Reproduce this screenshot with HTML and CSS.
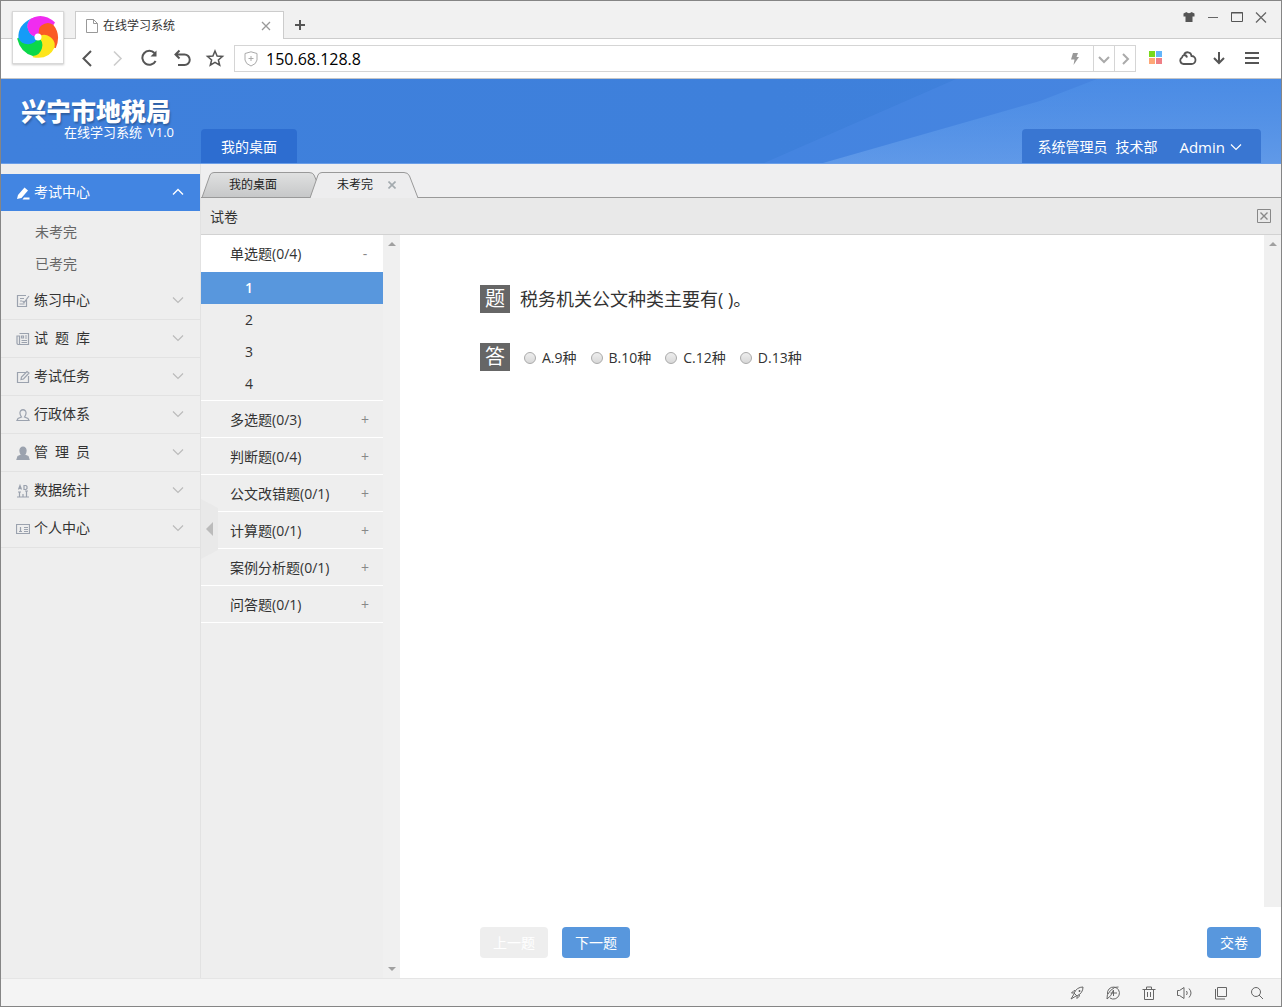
FILE: index.html
```html
<!DOCTYPE html>
<html lang="zh-CN">
<head>
<meta charset="utf-8">
<title>在线学习系统</title>
<link rel="stylesheet" href="styles.css">
</head>
<body>
<svg class="defs" aria-hidden="true">
  <symbol id="down" viewBox="0 0 12 8"><path d="M1 1.500l5 5 5-5" fill="none" stroke="currentColor" stroke-width="1.200"/></symbol>
  <symbol id="up" viewBox="0 0 12 8"><path d="M1 6.500l5-5 5 5" fill="none" stroke="currentColor" stroke-width="1.400"/></symbol>
  <symbol id="petal" viewBox="-23 -23 46 46"><path d="M0 0A11 11 0 0 1-6.500-18.500Q5-24 17-14L16.500-11.500A12.500 12.500 0 0 0 0 0Z" fill="currentColor"/></symbol>
</svg>

<div class="browser">
  <div class="browser-logo">
    <svg width="46" height="46" viewBox="-23 -23 46 46">
      <g fill="#f02cf0"><path d="M0 0A10.500 10.500 0 0 1-7-18.300Q5-25 17-14.500L15.400-12.100A12 12 0 0 0 0 0Z"/></g>
      <g fill="#fb5a24" transform="rotate(72)"><path d="M0 0A10.500 10.500 0 0 1-7-18.300Q5-23 16-13.500L15.400-12.100A12 12 0 0 0 0 0Z"/></g>
      <g fill="#fde51c" transform="rotate(144)"><path d="M0 0A10.500 10.500 0 0 1-7-18.300Q5-25 16-13.500L15.400-12.100A12 12 0 0 0 0 0Z"/></g>
      <g fill="#0bd84a" transform="rotate(216)"><path d="M0 0A10.500 10.500 0 0 1-7-18.300Q5-23 16-13.500L15.400-12.100A12 12 0 0 0 0 0Z"/></g>
      <g fill="#159bf8" transform="rotate(288)"><path d="M0 0A10.500 10.500 0 0 1-7-18.300Q5-23 15.400-12.100A10.500 10.500 0 0 0 0 0Z"/></g>
      <path d="M0 0A10.500 10.500 0 0 1-7-18.300Q-2-21 3-20Z" fill="#f02cf0"/>
      <circle r="3.500" fill="#fff"/>
    </svg>
  </div>
  <div class="tab-strip">
    <div class="browser-tab">
      <svg width="12" height="14" viewBox="0 0 12 14" fill="none" stroke="#999"><path d="M.5.500h7l4 4v9H.5zM7.500.500v4h4"/></svg>
      <span class="browser-tab-title">在线学习系统</span>
      <button class="plain" aria-label="关闭标签"><svg width="10" height="10" viewBox="0 0 10 10" stroke="#999" stroke-width="1.300"><path d="M1 1l8 8M9 1l-8 8"/></svg></button>
    </div>
    <button class="plain new-tab" aria-label="新标签"><svg width="12" height="12" viewBox="0 0 12 12" stroke="#555" stroke-width="2"><path d="M6 1v10M1 6h10"/></svg></button>
    <div class="window-buttons">
      <button class="plain" aria-label="皮肤"><svg width="12" height="12" viewBox="0 0 12 12" fill="#555"><path d="M3.500 1C4.500 2.500 7.500 2.500 8.500 1L11.500 2.500V5.500H9.500V11H2.500V5.500H.5V2.500Z"/></svg></button>
      <button class="plain" aria-label="最小化"><svg width="12" height="12" viewBox="0 0 12 12" stroke="#666"><path d="M1 6.500h10"/></svg></button>
      <button class="plain" aria-label="最大化"><svg width="12" height="12" viewBox="0 0 12 12" fill="none" stroke="#555"><path d="M.5 1.500h11v9H.5zM0 2h12"/></svg></button>
      <button class="plain" aria-label="关闭"><svg width="12" height="12" viewBox="0 0 12 12" stroke="#666" stroke-width="1.300"><path d="M1 1.500l10 10M11 1.500l-10 10"/></svg></button>
    </div>
  </div>
  <div class="toolbar">
    <div class="nav-buttons">
      <button class="plain" aria-label="后退"><svg width="20" height="20" viewBox="0 0 20 20" fill="none" stroke="#555" stroke-width="2"><path d="M14 3L6.500 10.500 14 18"/></svg></button>
      <button class="plain" aria-label="前进"><svg width="20" height="20" viewBox="0 0 20 20" fill="none" stroke="#ccc" stroke-width="1.600"><path d="M5 3.500L12 10.500 5 17.500"/></svg></button>
      <button class="plain" aria-label="刷新"><svg width="20" height="20" viewBox="0 0 20 20" fill="none" stroke="#555" stroke-width="2"><path d="M13.500 5A7 7 0 1 0 14.600 13"/><path d="M15.500 2.500v6h-6z" fill="#555" stroke="none"/></svg></button>
      <button class="plain" aria-label="撤销"><svg width="20" height="20" viewBox="0 0 20 20" fill="none" stroke="#555" stroke-width="2"><path d="M6.500 2.500L2.500 6.500l4 4M3 6.500h8.500a5 5 0 0 1 0 10.500H5"/></svg></button>
      <button class="plain" aria-label="收藏"><svg width="20" height="20" viewBox="0 0 20 20" fill="none" stroke="#555" stroke-width="1.500"><path d="M10 3l2.100 5 5.400.4-4.100 3.500 1.300 5.300L10 14.300l-4.700 2.900 1.300-5.300L2.500 8.400 7.900 8z"/></svg></button>
    </div>
    <div class="address">
      <svg width="14" height="16" viewBox="0 0 14 16" fill="none" stroke="#aaa"><path d="M7 .8L13 2.500V9Q12.500 13 7 15 1.500 13 1 9V2.500ZM7 5v5M4.500 7.500h5"/></svg>
      <input type="text" value="150.68.128.8" aria-label="地址">
      <button class="plain bolt" aria-label="极速模式"><svg width="10" height="14" viewBox="0 0 10 14" fill="#999"><path d="M3 1h5L6.500 5H9L3.500 13 4.500 7.500H1z"/></svg></button>
      <button class="plain cell" aria-label="展开"><svg width="12" height="12" viewBox="0 0 12 12" fill="none" stroke="#aaa" stroke-width="2"><path d="M1 4l5 5 5-5"/></svg></button>
      <button class="plain cell" aria-label="转到"><svg width="12" height="12" viewBox="0 0 12 12" fill="none" stroke="#aaa" stroke-width="2"><path d="M4 1l5 5-5 5"/></svg></button>
    </div>
    <div class="tool-buttons">
      <button class="plain" aria-label="应用"><svg width="14" height="16" viewBox="0 0 14 16"><path fill="#78d91d" d="M0 1h6v6H0z"/><path fill="#62b5fb" d="M7 1h6v6H7z"/><path fill="#fea776" d="M0 8h6v6H0z"/><path fill="#ef7f86" d="M7 8h6v6H7z"/></svg></button>
      <button class="plain" aria-label="云"><svg width="18" height="16" viewBox="0 0 18 16" fill="none" stroke="#555" stroke-width="1.800"><path d="M4.500 14A3.500 3.500 0 0 1 3 7.500Q3.500 5.500 5 5C6.500 1 12 1.500 12.500 6A4 4 0 0 1 12.500 14ZM5 5Q7.500 5 8 7.500"/></svg></button>
      <button class="plain" aria-label="下载"><svg width="14" height="16" viewBox="0 0 14 16" fill="none" stroke="#555" stroke-width="2"><path d="M6 2v11M1 8l5 5 5-5"/></svg></button>
      <button class="plain" aria-label="菜单"><svg width="14" height="16" viewBox="0 0 14 16" stroke="#555" stroke-width="2"><path d="M0 3h14M0 8h14M0 13h14"/></svg></button>
    </div>
  </div>
</div>

<header class="app-header">
  <svg class="header-art" viewBox="0 0 517 84" preserveAspectRatio="none" aria-hidden="true">
    <defs><linearGradient id="beam" x2="0" y2="1"><stop stop-color="#5aa0f2" stop-opacity=".25"/><stop offset="1" stop-color="#8abaf5" stop-opacity=".38"/></linearGradient></defs>
    <path d="M0 84L192 0H517V84Z" fill="#5590ee" fill-opacity=".28"/>
    <path d="M59 84L276 22 333 0H517V84Z" fill="url(#beam)"/>
  </svg>
  <div class="brand"><h1>兴宁市地税局</h1><p><span>在线学习系统</span><span>V1.0</span></p></div>
  <nav><a class="top-link" href="#">我的桌面</a></nav>
  <div class="user"><span>系统管理员</span><span>技术部</span><button class="plain account">Admin<svg width="12" height="8"><use href="#down"/></svg></button></div>
</header>

<div class="app">
  <nav class="sidebar">
    <button class="menu active"><svg class="mi" viewBox="0 0 14 14" fill="#fff"><path d="M1 13L2 9 8.500 1.500l3.500 3-6.500 7.500zM6.500 13.500L8 11.500h5.500v2z"/></svg><span>考试中心</span><svg class="chev"><use href="#up"/></svg></button>
    <div class="submenu"><a href="#">未考完</a><a href="#">已考完</a></div>
    <button class="menu"><svg class="mi" viewBox="0 0 14 14"><path d="M10 1.500H1.500v11h9V6M4 4.500h4M4 7h2M3.500 10h5M6.500 7L8 8.500 13 2"/></svg><span>练习中心</span><svg class="chev"><use href="#down"/></svg></button>
    <button class="menu"><svg class="mi" viewBox="0 0 14 14"><path d="M3.500 1.500h9v11H2A1.500 1.500 0 0 1 1 11V4h2.500v8M5.500 4h2v2h-2zM9 4h2M9 6h2M5.500 8.500H11M5.500 10.500H11"/></svg><span>试&ensp;题&ensp;库</span><svg class="chev"><use href="#down"/></svg></button>
    <button class="menu"><svg class="mi" viewBox="0 0 14 14"><path d="M9.500 2.500h-8v10h11V6M5 9.500l.5-2.500L11 1.500 13 3 7.500 9z"/></svg><span>考试任务</span><svg class="chev"><use href="#down"/></svg></button>
    <button class="menu"><svg class="mi" viewBox="0 0 14 14"><path d="M5.500 9Q3 5.500 4.500 3 7 .5 9.500 3 11 5.500 8.500 9L12 10.500 13 12.500H1L2 10.500Z"/></svg><span>行政体系</span><svg class="chev"><use href="#down"/></svg></button>
    <button class="menu"><svg class="mi solid" viewBox="0 0 14 14"><path d="M5.500 9Q3 5.500 4.500 2.500 7 0 9.500 2.500 11 5.500 8.500 9L12 10.500 13 13.500H1L2 10.500Z"/></svg><span>管&ensp;理&ensp;员</span><svg class="chev"><use href="#down"/></svg></button>
    <button class="menu"><svg class="mi" viewBox="0 0 14 14"><path d="M1 13h12M3.500 13V8M7 13v-3M10.500 13V7M2.500 5.500l1.500-4 1.500 4M3 4.500h2M8 1.500h2l1 1v2l-1 1H8zM2 8h3M9 7h3"/></svg><span>数据统计</span><svg class="chev"><use href="#down"/></svg></button>
    <button class="menu"><svg class="mi" viewBox="0 0 14 14"><path d="M.5 2.500h13v9H.5zM3 9.500h3M4.500 9V5M8 5.500h4M8 7.500h4M8 9.500h4"/></svg><span>个人中心</span><svg class="chev"><use href="#down"/></svg></button>
  </nav>

  <main class="workspace">
    <div class="doc-tabs">
      <svg class="doc-tabs-shape" width="217" height="26" viewBox="0 0 217 26" aria-hidden="true">
        <defs><linearGradient id="tabfill" x2="0" y2="1"><stop stop-color="#e0e1e1"/><stop offset="1" stop-color="#c6c7c8"/></linearGradient></defs>
        <path d="M1 25.500L9 3Q10 .5 13 .5H108Q112 .5 113 3L116 10 109.500 25.500Z" fill="url(#tabfill)" stroke="#999"/>
        <path d="M109 26L117 3Q118 .5 121 .5H203Q207 .5 208.500 4L217 26" fill="#ededee" stroke="#999"/>
      </svg>
      <button class="doc-tab">我的桌面</button>
      <button class="doc-tab current">未考完</button>
      <button class="doc-tab-close" aria-label="关闭未考完"><svg width="8" height="8" viewBox="0 0 8 8" stroke="#a3aaae" stroke-width="1.600"><path d="M.5.500l7 7M7.500.500l-7 7"/></svg></button>
    </div>
    <div class="panel-title"><h2>试卷</h2><button class="plain" aria-label="关闭"><svg width="14" height="14" viewBox="0 0 14 14" fill="none" stroke="#888"><path d="M.5.500h13v13H.5z"/><path d="M3.500 3.500l7 7M10.500 3.500l-7 7" stroke-width="1.400"/></svg></button></div>
    <div class="panel">
      <nav class="questions">
        <button class="group open">单选题(0/4)<i>-</i></button>
        <div class="numbers"><a class="selected" href="#">1</a><a href="#">2</a><a href="#">3</a><a href="#">4</a></div>
        <button class="group">多选题(0/3)<i>+</i></button>
        <button class="group">判断题(0/4)<i>+</i></button>
        <button class="group">公文改错题(0/1)<i>+</i></button>
        <button class="group">计算题(0/1)<i>+</i></button>
        <button class="group">案例分析题(0/1)<i>+</i></button>
        <button class="group">问答题(0/1)<i>+</i></button>
        <button class="collapse" aria-label="收起"></button>
      </nav>
      <div class="scrollbar"><span class="arrow-up"></span><span class="arrow-down"></span></div>
      <form class="exam">
        <div class="exam-view">
          <div class="exam-body">
            <div class="exam-row"><span class="badge">题</span><p class="stem">税务机关公文种类主要有( )。</p></div>
            <div class="exam-row"><span class="badge">答</span>
              <div class="options">
                <label><input type="radio" name="q1">A.9种</label>
                <label><input type="radio" name="q1">B.10种</label>
                <label><input type="radio" name="q1">C.12种</label>
                <label><input type="radio" name="q1">D.13种</label>
              </div>
            </div>
          </div>
          <div class="scrollbar"><span class="arrow-up"></span></div>
        </div>
        <div class="actions">
          <button type="button" class="btn" disabled>上一题</button>
          <button type="button" class="btn">下一题</button>
          <button type="button" class="btn submit">交卷</button>
        </div>
      </form>
    </div>
  </main>
</div>

<footer class="status">
  <button class="plain" aria-label="加速"><svg viewBox="0 0 14 14"><path d="M4 7Q7 1 13 1 13 7 7 10ZM4 7H1.500L4 4.500 5.500 5M7 10v2.500L9.500 10 9 8.500M4 8L1 13l5-3M9 4.500h1v1H9z"/></svg></button>
  <button class="plain" aria-label="浏览器医生"><svg viewBox="0 0 14 14"><path d="M4 12A6 6 0 1 0 1.500 8M1 13Q0 9 4.500 4.500T12.500 1M1 13Q5 11 7.500 4M7.500 4v6M4.500 7H11"/></svg></button>
  <button class="plain" aria-label="清理"><svg viewBox="0 0 14 14"><path d="M.5 3.500h13M4.500 3V1h5v2M2.500 3.500v10h9v-10M5.500 6v5M8.500 6v5"/></svg></button>
  <button class="plain" aria-label="声音"><svg viewBox="0 0 16 14"><path d="M.5 4.500h2L7 1.500v11L2.500 9.500h-2zM9.500 5q1.500 2 0 4M12 2.500q4 4.500 0 9"/></svg></button>
  <button class="plain" aria-label="窗口"><svg viewBox="0 0 14 14"><path d="M3.500 1.500h9v9h-9zM1.500 3v10H11"/></svg></button>
  <button class="plain" aria-label="缩放"><svg viewBox="0 0 14 14"><circle cx="6" cy="6" r="4.500"/><path d="M9 9l4 4"/></svg></button>
</footer>
</body>
</html>
```

FILE: styles.css
```css
* { box-sizing: border-box; }

body {
  margin: 0;
  min-height: 100vh;
  display: flex;
  flex-direction: column;
  border: 1px solid #858585;
  background: #eee;
  color: #333;
  font: 14px/20px "Open Sans", "Noto Sans CJK SC", sans-serif;
}

h1, h2, p { margin: 0; font-weight: 400; }
a { color: inherit; text-decoration: none; }
button, input { font: inherit; color: inherit; }
button { padding: 0; border: 0; background: none; text-align: left; }
svg { display: block; flex: none; }
.defs { position: absolute; width: 0; height: 0; }

.plain {
  display: flex;
  align-items: center;
  justify-content: center;
}

/* Browser chrome */
.browser { position: relative; background: #fff; border-bottom: 1px solid #c3c5c8; }

.browser-logo {
  position: absolute;
  left: 11px;
  top: 10px;
  width: 52px;
  height: 53px;
  padding: 2px;
  background: #fff;
  border: 1px solid #d8d8d8;
  box-shadow: 0 1px 2px #0003;
}

.tab-strip {
  display: flex;
  height: 38px;
  padding: 10px 8px 0 74px;
  background: #f1f1f1;
  border-bottom: 1px solid #ccc;
}

.browser-tab {
  display: flex;
  align-items: center;
  gap: 5px;
  width: 209px;
  height: 28px;
  padding: 0 12px 0 10px;
  background: #fff;
  border: 1px solid #ccc;
  border-bottom: 0;
  font-size: 12px;
}
.browser-tab-title { flex: 1; }
.new-tab { width: 32px; height: 28px; }
.window-buttons { display: flex; height: 12px; margin-left: auto; }
.window-buttons .plain { width: 24px; }

.toolbar { display: flex; align-items: center; height: 39px; padding: 0 13px 0 70px; }
.nav-buttons, .tool-buttons { display: flex; }
.nav-buttons .plain, .tool-buttons .plain { width: 32px; height: 27px; padding-bottom: 2px; }
.tool-buttons { margin-left: 4px; }

.address {
  flex: 1;
  display: flex;
  align-items: center;
  height: 27px;
  margin-left: 3px;
  padding-left: 9px;
  border: 1px solid #d5d5d5;
  font-size: 16px;
}
.address input {
  flex: 1;
  min-width: 0;
  height: 25px;
  padding: 0 8px;
  border: 0;
  color: #000;
  background: none;
}
.bolt { width: 36px; height: 25px; }
.cell { width: 21px; height: 25px; border-left: 1px solid #d5d5d5; }

/* Application header */
.app-header {
  position: relative;
  display: flex;
  align-items: flex-end;
  height: 85px;
  padding-right: 20px;
  background: linear-gradient(90deg, #3f80dc, #3e80db 60%, #4181dc);
  border-bottom: 1px solid #6a9ee8;
  color: #fff;
}
.header-art { position: absolute; right: 0; top: 0; width: 517px; height: 100%; }
.brand { width: 200px; height: 84px; padding: 20px 27px 0 20px; }
.brand h1 {
  font-size: 25px;
  line-height: 25px;
  font-weight: 900;
  white-space: nowrap;
  text-shadow: 1px 2px 2px #0004;
}
.brand p {
  display: flex;
  justify-content: flex-end;
  gap: 6px;
  font-size: 13px;
  line-height: 16px;
  white-space: nowrap;
}
.top-link {
  display: block;
  padding: 8px 20px 6px;
  border-radius: 4px 4px 0 0;
  background: #2d6dd0;
}
.user {
  position: relative;
  display: flex;
  gap: 8px;
  margin-left: auto;
  padding: 8px 19px 6px 15px;
  border-radius: 4px 4px 0 0;
  background: #3976d2;
}
.account { gap: 5px; margin-left: 14px; font-size: 15px; }

/* Sidebar */
.app { flex: 1; display: flex; }
.sidebar { width: 200px; padding-top: 10px; border-right: 1px solid #e2e2e2; }
.menu {
  display: flex;
  align-items: center;
  gap: 4px;
  width: 100%;
  height: 38px;
  padding: 0 16px 2px 15px;
  border-bottom: 1px solid #e2e2e2;
}
.menu span { flex: 1; }
.menu.active { height: 37px; border: 0; background: #4285e2; color: #fff; }
.mi { width: 14px; height: 14px; margin-top: 2px; }
.menu:not(.active) .mi { fill: none; stroke: #9ba2ae; stroke-width: 1.2; }
.menu:not(.active) .mi.solid { fill: #9ba2ae; }
.chev { width: 12px; height: 8px; color: #bbb; }
.active .chev { color: #fff; }
.submenu { padding: 5px 0 2px; color: #666; }
.submenu a { display: block; padding: 6px 34px; }

/* Workspace */
.workspace { flex: 1; min-width: 0; display: flex; flex-direction: column; }
.doc-tabs {
  position: relative;
  display: flex;
  height: 34px;
  padding: 8px 0 0 28px;
  border-bottom: 1px solid #999;
  background: #efeff0;
  color: #222;
  font-size: 12px;
}
.doc-tabs-shape { position: absolute; left: 0; bottom: -1px; }
.doc-tab { position: relative; height: 25px; padding-right: 60px; }
.doc-tab.current { padding-right: 15px; }
.doc-tab-close { position: relative; height: 25px; }

.panel-title {
  display: flex;
  align-items: center;
  justify-content: space-between;
  height: 37px;
  padding: 0 10px 0 9px;
  background: #e9e9e9;
  border-bottom: 1px solid #d2d2d2;
}
.panel-title h2 { padding-top: 2px; font-size: 14px; }

.panel { flex: 1; display: flex; }
.questions { position: relative; width: 182px; }
.group {
  display: flex;
  align-items: center;
  justify-content: space-between;
  width: 100%;
  height: 37px;
  padding: 2px 14px 0 29px;
  border-bottom: 1px solid #fff;
}
.group i { width: 8px; font-style: normal; text-align: center; color: #888; }
.group.open { background: #fff; }
.numbers { border-bottom: 1px solid #fff; }
.numbers a { display: block; padding: 6px 44px; }
.numbers .selected { background: #5897dd; color: #fff; font-weight: 600; }

.collapse {
  position: absolute;
  left: 0;
  top: 264px;
  width: 17px;
  height: 60px;
  background: #e9e9e9;
  clip-path: polygon(0 0, 100% 9px, 100% 51px, 0 100%);
}
.collapse::before {
  content: "";
  position: absolute;
  left: 5px;
  top: 23px;
  border: 7px solid transparent;
  border-left: 0;
  border-right-color: #bbb;
}

.scrollbar {
  display: flex;
  flex-direction: column;
  justify-content: space-between;
  align-items: center;
  width: 17px;
  padding: 7px 0;
  background: #f0f0f0;
}
.arrow-up, .arrow-down { border: 4px solid transparent; }
.arrow-up { border-top: 0; border-bottom-color: #a0a0a0; }
.arrow-down { border-bottom: 0; border-top-color: #a0a0a0; }

/* Exam */
.exam { flex: 1; display: flex; flex-direction: column; background: #fff; }
.exam-view { flex: 1; display: flex; }
.exam-body { flex: 1; padding: 50px 40px 50px 80px; }
.exam-row { display: flex; align-items: center; gap: 10px; margin-bottom: 30px; }
.badge {
  width: 30px;
  background: #666;
  color: #fff;
  font-size: 20px;
  line-height: 28px;
  text-align: center;
}
.stem { font-size: 18px; line-height: 28px; }
.options { display: flex; flex-wrap: wrap; gap: 14px; margin-left: 4px; padding-top: 2px; }
.options label { display: flex; align-items: center; gap: 6px; }
.options input {
  appearance: none;
  width: 12px;
  height: 12px;
  margin: 0;
  border: 1px solid #aaa;
  border-radius: 50%;
  background: linear-gradient(#eee, #d8d8d8);
}
.options input:checked { background: radial-gradient(#444 3px, #e4e4e4 4px); }

.actions { display: flex; gap: 14px; padding: 20px 20px 20px 80px; }
.btn {
  height: 31px;
  padding: 0 13px;
  border-radius: 4px;
  background: #5897dd;
  color: #fff;
}
.btn:disabled { background: #eee; }
.submit { margin-left: auto; }

/* Status bar */
.status {
  display: flex;
  justify-content: flex-end;
  height: 28px;
  padding: 0 6px;
  background: #f4f4f4;
  border-top: 1px solid #e5e5e5;
}
.status .plain { width: 36px; height: 27px; }
.status svg { height: 14px; fill: none; stroke: #666; }
```
